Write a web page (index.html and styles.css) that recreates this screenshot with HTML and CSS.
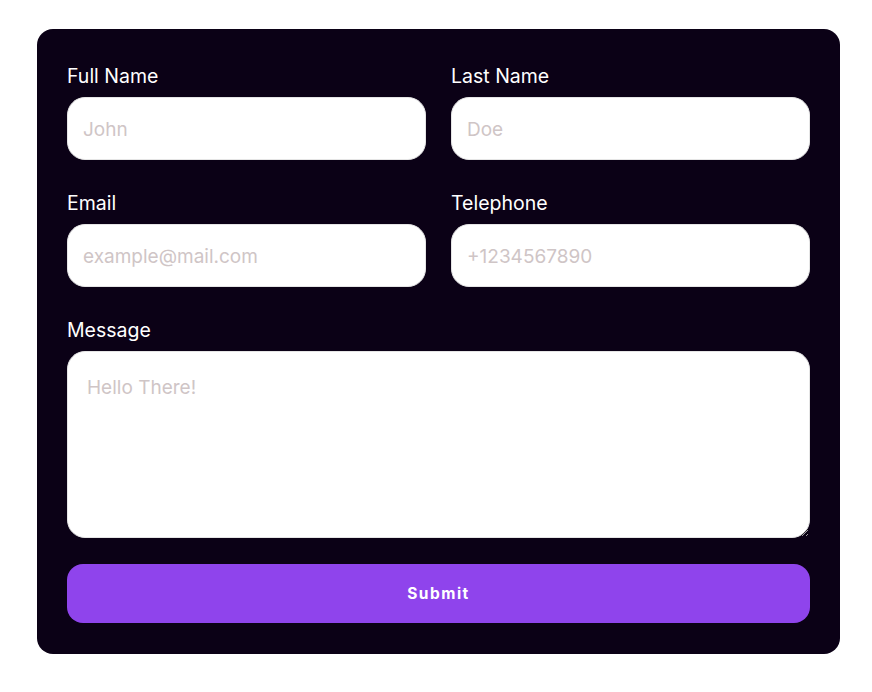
FILE: index.html
```html
<!DOCTYPE html>
<html lang="en">
<head>
<meta charset="utf-8">
<title>Contact Form</title>
<link rel="stylesheet" href="styles.css">
</head>
<body>
<form class="card">
  <div class="grid">
    <div class="field">
      <label class="label" for="fn">Full Name</label>
      <input class="input" id="fn" type="text" placeholder="John">
    </div>
    <div class="field">
      <label class="label" for="ln">Last Name</label>
      <input class="input" id="ln" type="text" placeholder="Doe">
    </div>
    <div class="field">
      <label class="label" for="em">Email</label>
      <input class="input" id="em" type="email" placeholder="example@mail.com">
    </div>
    <div class="field">
      <label class="label" for="tel">Telephone</label>
      <input class="input" id="tel" type="tel" placeholder="+1234567890">
    </div>
    <div class="field wide">
      <label class="label" for="msg">Message</label>
      <textarea class="textarea" id="msg" placeholder="Hello There!"></textarea>
    </div>
    <button class="submit wide" type="button">Submit</button>
  </div>
</form>
</body>
</html>
```
FILE: styles.css
```css
* { box-sizing: border-box; }
html, body { margin: 0; padding: 0; background: #ffffff; }
body {
  font-family: Inter, "Noto Sans", sans-serif;
  padding: 29px 0 0 37px;
}
.card {
  width: 803px;
  background: #0b0116;
  border-radius: 16px;
  padding: 30px 30px 31px 30px;
}
.grid {
  display: grid;
  grid-template-columns: 359px 359px;
  column-gap: 25px;
  row-gap: 26px;
}
.wide { grid-column: 1 / -1; }
.field { display: flex; flex-direction: column; }
.label {
  color: #ffffff;
  font-size: 19.5px;
  line-height: 32px;
  padding-top: 1px;
  margin-bottom: 5px;
  font-weight: 400;
}
.input, .textarea {
  border: 1px solid #e5e5e5;
  background: #ffffff;
  border-radius: 18px;
  font-family: Inter, "Noto Sans", sans-serif;
  font-size: 19px;
  color: #222;
  outline: none;
}
.input {
  height: 63px;
  padding: 1px 15px 0 15px;
}
.textarea {
  height: 187px;
  padding: 24px 19px 20px 19px;
  resize: both;
}
.input::placeholder, .textarea::placeholder { color: #cfc5c6; }
.submit {
  height: 59px;
  border: none;
  border-radius: 16px;
  background: #8f44ec;
  color: #ffffff;
  font-family: Inter, "Noto Sans", sans-serif;
  font-weight: 700;
  font-size: 15.5px;
  letter-spacing: 1.5px;
  cursor: pointer;
}
```
